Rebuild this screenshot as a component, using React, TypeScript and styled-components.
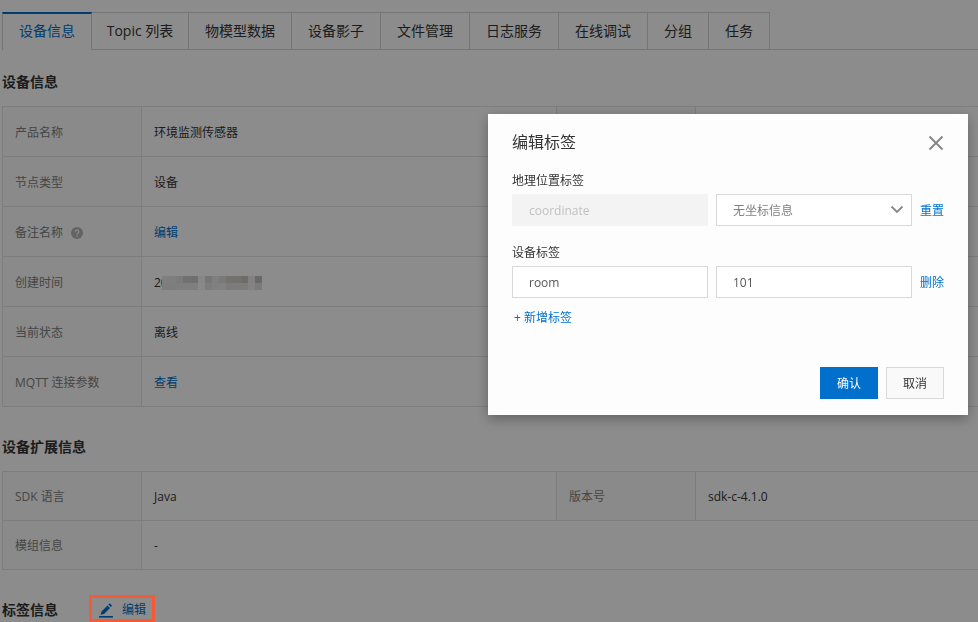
import React from "react";
import styled, { createGlobalStyle } from "styled-components";

const Global = createGlobalStyle`
  *, *::before, *::after { box-sizing: border-box; }
  body {
    margin: 0;
    background: #fff;
    color: #333;
    font: 12px/18px "Open Sans", "Noto Sans CJK SC", sans-serif;
  }
  button, input, select { font: inherit; color: inherit; }
`;

const Page = styled.main`
  padding: 12px 0 0 2px;
  overflow: hidden;
`;

const TabBar = styled.div`
  display: flex;
  height: 38px;
  border-bottom: 1px solid #d6d6d6;
`;

const Tab = styled.button<{ $active?: boolean; $width: number }>`
  flex: none;
  width: ${(p) => p.$width}px;
  height: 38px;
  padding: ${(p) => (p.$active ? "0 0 3px" : "0")};
  border: solid #d6d6d6;
  border-width: 1px 1px 1px 0;
  background: #fff;
  font-size: 14px;
  white-space: nowrap;
  cursor: pointer;
  ${(p) =>
    p.$active &&
    `
    color: #0070cc;
    border-left-width: 1px;
    border-top: 2px solid #0070cc;
    border-bottom: 0;
  `}
`;

const Section = styled.section<{ $first?: boolean }>`
  margin-top: ${(p) => (p.$first ? 22 : 30)}px;
`;

const SectionHead = styled.div`
  display: flex;
  align-items: center;
  gap: 31px;
  height: 20px;
  margin-bottom: 14px;
`;

const SectionTitle = styled.h2`
  margin: 0;
  font-size: 14px;
  line-height: 20px;
  font-weight: 600;
`;

const InfoTable = styled.table`
  width: 100%;
  table-layout: fixed;
  border-collapse: separate;
  border-spacing: 0;
  border-top: 1px solid #e3e3e3;
  border-left: 1px solid #e3e3e3;
`;

const LabelCol = styled.col`
  width: 139px;
`;

const ValueCol = styled.col`
  width: 415px;
`;

const Label = styled.th<{ $h: number }>`
  height: ${(p) => p.$h}px;
  padding: 2px 12px 0;
  border: solid #e3e3e3;
  border-width: 0 1px 1px 0;
  background: #fbfbfb;
  color: #808080;
  font-weight: 400;
  text-align: left;
`;

const Value = styled.td<{ $last?: boolean }>`
  padding: 2px 12px 0;
  border: solid #e3e3e3;
  border-width: 0 ${(p) => (p.$last ? 0 : 1)}px 1px 0;
`;

const Inline = styled.span`
  display: flex;
  align-items: center;
  gap: 8px;
`;

const Masked = styled.span`
  display: flex;
  align-items: center;
  svg { margin-left: -6px; }
`;

const Link = styled.a`
  color: #0070cc;
  text-decoration: none;
`;

const EditTags = styled(Link)`
  position: relative;
  display: flex;
  align-items: center;
  gap: 9px;
  padding: 0 9px 0 10px;
`;

const Frame = styled.span`
  position: absolute;
  inset: -6px 0 -3px;
  z-index: 20;
  border: 3px solid #f65a35;
  border-radius: 1px;
  pointer-events: none;
`;

const Overlay = styled.div`
  position: fixed;
  inset: 0;
  z-index: 10;
  display: flex;
  justify-content: flex-end;
  align-items: flex-start;
  padding: 114px 10px 0;
  background: rgba(0, 0, 0, 0.45);
`;

const Dialog = styled.form`
  width: 480px;
  max-width: 100%;
  padding: 16px 24px;
  background: #fdfdfd;
  box-shadow: 0 4px 12px rgba(0, 0, 0, 0.3);
`;

const DialogHead = styled.header`
  display: flex;
  align-items: center;
  justify-content: space-between;
  margin-bottom: 18px;
`;

const DialogTitle = styled.h1`
  margin: 0;
  font-size: 16px;
  line-height: 24px;
  font-weight: 400;
`;

const IconButton = styled.button`
  display: flex;
  padding: 2px 0 0;
  border: 0;
  background: none;
  cursor: pointer;
`;

const Group = styled.fieldset`
  margin: 0 0 18px;
  padding: 0;
  border: 0;
`;

const GroupLabel = styled.legend`
  margin-bottom: 4px;
  padding: 0;
`;

const FieldRow = styled.div`
  display: grid;
  grid-template-columns: 1fr 1fr auto;
  align-items: center;
  gap: 8px;
`;

const Input = styled.input`
  width: 100%;
  min-width: 0;
  height: 32px;
  padding: 0 16px;
  border: 1px solid #d9d9d9;
  border-radius: 0;
  background: #fff;
  color: #555;
  &:disabled {
    border-color: #f3f3f3;
    background: #f3f3f3;
    color: #c1c1c1;
  }
`;

const SelectBox = styled.div`
  position: relative;
  svg {
    position: absolute;
    right: 8px;
    top: 11px;
    pointer-events: none;
  }
`;

const Select = styled.select`
  width: 100%;
  height: 32px;
  padding: 2px 24px 0 16px;
  border: 1px solid #d9d9d9;
  border-radius: 0;
  background: #fff;
  color: #808080;
  appearance: none;
`;

const TextButton = styled.button`
  padding: 2px 0 0;
  border: 0;
  background: none;
  color: #0070cc;
  cursor: pointer;
`;

const AddButton = styled(TextButton)`
  display: block;
  margin: -9px 0 40px 2px;
`;

const Footer = styled.footer`
  display: flex;
  justify-content: flex-end;
  gap: 8px;
`;

const Button = styled.button<{ $primary?: boolean }>`
  height: 32px;
  padding: 2px 16px 0;
  border: 1px solid ${(p) => (p.$primary ? "#0070cc" : "#d9d9d9")};
  background: ${(p) => (p.$primary ? "#0070cc" : "#f9f9f9")};
  color: ${(p) => (p.$primary ? "#fff" : "#333")};
  cursor: pointer;
`;

const HelpIcon = () => (
  <svg width="12" height="12" viewBox="0 0 12 12" aria-hidden="true">
    <circle cx="6" cy="6" r="6" fill="#b5b5b5" />
    <path d="M4.2 4.8a1.8 1.8 0 1 1 2.7 1.5c-.6.4-.9.6-.9 1.2M6 8.3v1.2" fill="none" stroke="#fff" strokeWidth="1.1" />
  </svg>
);

const PenIcon = () => (
  <svg width="14" height="15" viewBox="0 0 14 15" fill="#0070cc" aria-hidden="true">
    <path d="M0 13h14v1.6H0z" />
    <path d="M1.6 11.8l.9-3.4 6-6 2.5 2.5-6 6zM9.3 1.6l.9-.9q.5-.5 1 0l1.5 1.5q.5.5 0 1l-.9.9z" />
  </svg>
);

const CloseIcon = () => (
  <svg width="16" height="16" viewBox="0 0 16 16" aria-hidden="true">
    <path d="M1.5 1.5l13 13M14.5 1.5l-13 13" stroke="#888" strokeWidth="2" />
  </svg>
);

const Chevron = () => (
  <svg width="14" height="9" viewBox="0 0 14 9" aria-hidden="true">
    <path d="M1.5 1.5l5.5 5.5 5.5-5.5" fill="none" stroke="#888" strokeWidth="1.8" />
  </svg>
);

const MOSAIC = [
  ["#e8e8e8", "#e6e6e6", "#e0e0e0", "#cfcecc", "#c8cacc", "#f6f6f6", "#d8d8d8", "#e8e8e8", "#dcdcdc", "#d4d0cc", "#d2cec9", "#c8c4c0", "#ececec", "#bcc0c4"],
  ["#e4e4e4", "#e4e4e4", "#e6e6e6", "#e6e6e6", "#e8e8e8", "#fafafa", "#e2e2e2", "#e8eaec", "#ececec", "#e0e0e0", "#e2e2e2", "#e2e2e2", "#eeeeee", "#dedede"],
];

const Mosaic = () => (
  <svg width="100" height="14" viewBox="0 0 98 14" preserveAspectRatio="none" shapeRendering="crispEdges" aria-hidden="true">
    {MOSAIC.map((row, y) =>
      row.map((fill, x) => <rect key={`${x}-${y}`} x={x * 7} y={y * 7} width="7" height="7" fill={fill} />)
    )}
  </svg>
);

const TABS = [
  { name: "设备信息", width: 90 },
  { name: "Topic 列表", width: 97 },
  { name: "物模型数据", width: 103 },
  { name: "设备影子", width: 89 },
  { name: "文件管理", width: 89 },
  { name: "日志服务", width: 89 },
  { name: "在线调试", width: 89 },
  { name: "分组", width: 61 },
  { name: "任务", width: 61 },
];

const Columns = () => (
  <colgroup>
    <LabelCol />
    <ValueCol />
    <LabelCol />
    <col />
  </colgroup>
);

const DEVICE_ROWS: { label: React.ReactNode; value: React.ReactNode }[] = [
  { label: "节点类型", value: "设备" },
  { label: <Inline>备注名称<HelpIcon /></Inline>, value: <Link href="#remark">编辑</Link> },
  { label: "创建时间", value: <Masked>20<Mosaic /></Masked> },
  { label: "当前状态", value: "离线" },
  { label: "MQTT 连接参数", value: <Link href="#mqtt">查看</Link> },
];

export default function App() {
  return (
    <>
      <Global />
      <Page>
        <TabBar role="tablist">
          {TABS.map((tab, i) => (
            <Tab key={tab.name} type="button" role="tab" aria-selected={i === 0} $active={i === 0} $width={tab.width}>
              {tab.name}
            </Tab>
          ))}
        </TabBar>

        <Section $first>
          <SectionHead>
            <SectionTitle>设备信息</SectionTitle>
          </SectionHead>
          <InfoTable>
            <Columns />
            <tbody>
              <tr>
                <Label $h={50} scope="row">产品名称</Label>
                <Value>环境监测传感器</Value>
                <Label $h={50} as="td" />
                <Value $last />
              </tr>
              {DEVICE_ROWS.map((row, i) => (
                <tr key={i}>
                  <Label $h={50} scope="row">{row.label}</Label>
                  <Value $last colSpan={3}>{row.value}</Value>
                </tr>
              ))}
            </tbody>
          </InfoTable>
        </Section>

        <Section>
          <SectionHead>
            <SectionTitle>设备扩展信息</SectionTitle>
          </SectionHead>
          <InfoTable>
            <Columns />
            <tbody>
              <tr>
                <Label $h={49} scope="row">SDK 语言</Label>
                <Value>Java</Value>
                <Label $h={49} scope="row">版本号</Label>
                <Value $last>sdk-c-4.1.0</Value>
              </tr>
              <tr>
                <Label $h={49} scope="row">模组信息</Label>
                <Value $last colSpan={3}>-</Value>
              </tr>
            </tbody>
          </InfoTable>
        </Section>

        <Section>
          <SectionHead>
            <SectionTitle>标签信息</SectionTitle>
            <EditTags href="#tags">
              <PenIcon />
              编辑
              <Frame />
            </EditTags>
          </SectionHead>
        </Section>
      </Page>

      <Overlay>
        <Dialog role="dialog" aria-labelledby="dialog-title" onSubmit={(e) => e.preventDefault()}>
          <DialogHead>
            <DialogTitle id="dialog-title">编辑标签</DialogTitle>
            <IconButton type="button" aria-label="关闭">
              <CloseIcon />
            </IconButton>
          </DialogHead>
          <Group>
            <GroupLabel id="geo-label">地理位置标签</GroupLabel>
            <FieldRow>
              <Input aria-labelledby="geo-label" defaultValue="coordinate" disabled />
              <SelectBox>
                <Select aria-labelledby="geo-label" defaultValue="none">
                  <option value="none">无坐标信息</option>
                </Select>
                <Chevron />
              </SelectBox>
              <TextButton type="button">重置</TextButton>
            </FieldRow>
          </Group>
          <Group>
            <GroupLabel id="device-label">设备标签</GroupLabel>
            <FieldRow>
              <Input aria-labelledby="device-label" defaultValue="room" />
              <Input aria-labelledby="device-label" defaultValue="101" />
              <TextButton type="button">删除</TextButton>
            </FieldRow>
          </Group>
          <AddButton type="button">+ 新增标签</AddButton>
          <Footer>
            <Button type="submit" $primary>确认</Button>
            <Button type="button">取消</Button>
          </Footer>
        </Dialog>
      </Overlay>
    </>
  );
}
